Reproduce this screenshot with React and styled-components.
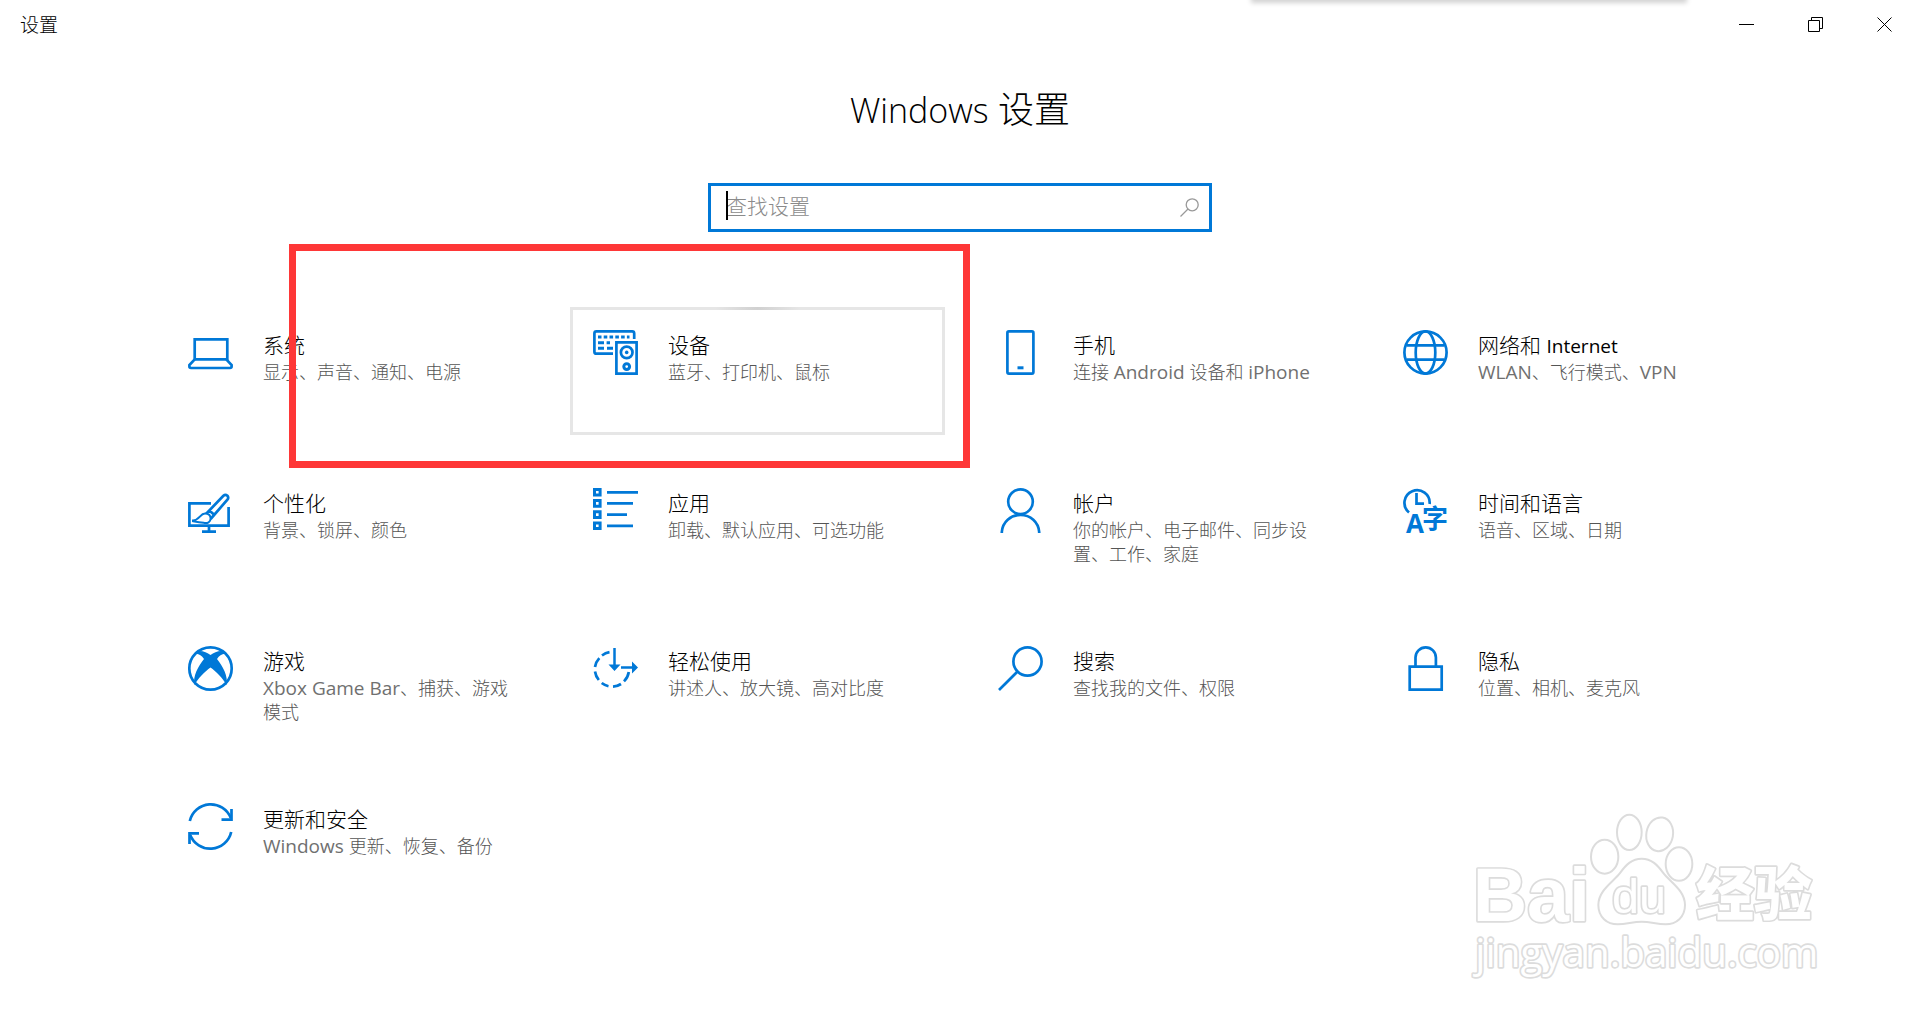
import styled, { createGlobalStyle, css } from "styled-components";

const blue = "#0078d7";

const GlobalStyle = createGlobalStyle`
  * {
    box-sizing: border-box;
  }
  body {
    margin: 0;
    background-color: #fff;
    color: #000;
    font-family: "Open Sans", "Noto Sans CJK SC", sans-serif;
  }
  h1, h2, p {
    margin: 0;
  }
`;

const Page = styled.div`
  position: relative;
  min-height: 100vh;
  overflow: hidden;
`;

/* bottom edge of a floating bar that hangs above the window */
const TopShade = styled.div`
  position: absolute;
  top: -10px;
  right: 234px;
  width: 434px;
  height: 10px;
  box-shadow: 0 2px 5px 1px rgba(0, 0, 0, 0.18);
`;

const TitleBar = styled.header`
  display: flex;
  justify-content: space-between;
  align-items: center;
  height: 48px;
  padding: 0 1px 0 20px;
  font-size: 19px;
  font-weight: 300;
`;

const WindowButtons = styled.div`
  display: flex;
  height: 100%;
`;

const WindowButton = styled.button`
  all: unset;
  width: 69px;
  display: flex;
  justify-content: center;
  align-items: center;
`;

const Main = styled.main`
  display: flex;
  flex-direction: column;
  align-items: center;
  padding: 38px 30px 30px;
`;

/* latin words sit next to the chinese text in their own size and weight */
const Latin = styled.span`
  font-size: ${({ $size }) => $size}px;
  font-weight: ${({ $weight }) => $weight || 400};
  line-height: 1;
`;

const Heading = styled.h1`
  font-size: 36px;
  font-weight: 300;
  line-height: 48px;
`;

const SearchBox = styled.label`
  position: relative;
  display: flex;
  align-items: center;
  width: 100%;
  max-width: 504px;
  height: 49px;
  margin: 49px 0 75px;
  padding: 0 10px 0 15px;
  border: 3px solid ${blue};
`;

const SearchInput = styled.input`
  all: unset;
  flex: 1;
  min-width: 0;
  padding-bottom: 3px;
  font-size: 21px;
  font-weight: 300;
  line-height: 28px;
  caret-color: transparent;
  &::placeholder {
    color: #8a8a8a;
    opacity: 1;
  }
`;

const Caret = styled.span`
  position: absolute;
  left: 15px;
  top: 5px;
  width: 2px;
  height: 29px;
  background-color: #000;
`;

const Grid = styled.nav`
  position: relative;
  display: grid;
  grid-template-columns: repeat(auto-fit, 375px);
  justify-content: center;
  gap: 30px;
  width: 100%;
  max-width: 1590px;
`;

const Tile = styled.a`
  display: flex;
  gap: 30px;
  height: 128px;
  padding: 20px 24px 0 20px;
  border: 3px solid transparent;
  color: inherit;
  text-decoration: none;
  ${({ $active }) =>
    $active &&
    css`
      border-image: radial-gradient(circle at 50% 0, #d0d0d0, #e6e6e6 42px) 3;
    `}
`;

const TileIcon = styled.svg`
  flex: none;
  width: 45px;
  height: 45px;
  overflow: visible;
  fill: none;
  stroke: ${blue};
  stroke-width: 2.7;
  .solid {
    fill: ${blue};
    stroke: none;
  }
  text {
    fill: ${blue};
    stroke: none;
  }
`;

const TileTitle = styled.h2`
  font-size: 21px;
  font-weight: 300;
  line-height: 30px;
`;

const TileInfo = styled.p`
  color: #555;
  font-size: 18px;
  font-weight: 300;
  line-height: 24px;
  ${Latin} {
    color: #707070;
  }
`;

/* red frame that points at the first two tiles */
const Marker = styled.div`
  position: absolute;
  left: 124px;
  top: -63px;
  width: 681px;
  height: 224px;
  border: 7px solid #fe3737;
  pointer-events: none;
`;

const Watermark = styled.svg`
  position: absolute;
  right: 80px;
  bottom: 19px;
  width: 400px;
  height: 210px;
  fill: #fff;
  stroke: #dcdcdc;
  stroke-width: 6;
  stroke-linejoin: round;
  pointer-events: none;
  text {
    paint-order: stroke;
    stroke-width: 10;
  }
`;

const icons = {
  system: (
    <>
      <path d="M6.7 9.3h32.6v20H6.7z" />
      <path d="M6.7 29.3 1.4 35v1.6q0 1.4 1.6 1.4h39q1.6 0 1.6-1.4V35l-5.3-5.7" />
    </>
  ),
  devices: (
    <>
      <path d="M20 23.7H3.4q-2 0-2-2V3.4q0-2 2-2h35.8q2 0 2 2V9" />
      <path
        d="M5 7h3.5m2.2 0h3.6m2.2 0h3.6m2.2 0h3.6m2.2 0h3.6m2.2 0h2.6M5 12.7h6m2.6 0H17M5 18.3h6m3 0h6"
        strokeWidth="3"
      />
      <path d="M23.4 12.4h20.2v31.2H23.4z" />
      <circle cx="33.7" cy="22.4" r="5.8" />
      <circle cx="33.7" cy="22.4" r="1.8" className="solid" />
      <circle cx="33.7" cy="36.6" r="2.9" strokeWidth="3" />
    </>
  ),
  phone: (
    <>
      <rect x="9.4" y="1.4" width="26" height="42.2" rx="1.5" />
      <path d="M19.5 37.8h6" strokeWidth="3" />
    </>
  ),
  network: (
    <>
      <circle cx="22.5" cy="22.5" r="21.1" />
      <ellipse cx="22.5" cy="22.5" rx="9.8" ry="21.1" />
      <path d="M3.5 15.4h38M3.5 29.6h38" />
    </>
  ),
  personalize: (
    <>
      <path d="M23 15.3H1.4v22.4h39.2V19M21 38v6M14 43.7h14" />
      <path d="M17.5 26.5 35.4 7.7q2-1.8 4 0 1.6 2 0 4L22.6 31M21.4 22.6l5 4.4" />
      <path
        d="M5 32.4c6.5 0 7-6.8 12-6.8 3.4 0 5.6 2 5.6 5 0 3.5-3 5-7 4.2C10 33.8 8 33.6 5 33.2z"
        fill="#fff"
        strokeWidth="2"
      />
    </>
  ),
  apps: (
    <>
      <path
        d="M1.5 1.5h5.6v5.6H1.5zM1.5 12.6h5.6v5.6H1.5zM1.5 23.8h5.6v5.6H1.5zM1.5 35h5.6v5.6H1.5z"
        strokeWidth="3"
      />
      <path d="M14 4.3h31M14 15.4h26M14 26.6h20M14 37.8h26" />
    </>
  ),
  accounts: (
    <>
      <circle cx="22.5" cy="13.7" r="12.3" />
      <path d="M3.8 45v-1C4.6 33.8 12.5 27 22.5 27s17.9 6.8 18.7 17v1" />
    </>
  ),
  time: (
    <>
      <path d="M6 24.5A12.6 12.6 0 1 1 26.6 16" />
      <path d="M13.5 5v10.7H21" />
      <text x="3" y="45" fontSize="26" fontWeight="700" fontFamily="Open Sans">A</text>
      <text x="19" y="40" fontSize="26" fontWeight="700" fontFamily="Noto Sans CJK SC">字</text>
    </>
  ),
  gaming: (
    <>
      <circle cx="22.5" cy="22.5" r="21.2" />
      <path
        className="solid"
        d="M7.5 6C12.5 3.3 18.5 6.3 22.5 9c4-2.7 10-5.7 15-3l1 2c-4-.8-7 1.5-9.5 5C34.5 20 40.5 30 38.5 39 35 32 28 25.5 22.5 21.5 17 25.5 10 32 6.5 39 4.5 30 10.5 20 16 13 13.5 9.5 10.5 7.2 6.5 8z"
      />
    </>
  ),
  ease: (
    <>
      <path d="M21.5 2v18M28 21.4h12" strokeWidth="2.5" />
      <path className="solid" d="M15.5 18.5h12l-6 6.5zM39 15.5v12l6-6z" />
      <path d="M16.5 6.2a17.2 17.2 0 0 0-7.5 3.3M6.3 12.2A17 17 0 0 0 2 21M2 25.5a17 17 0 0 0 3.8 8.5M8.7 37a17 17 0 0 0 6.8 3.2M20 40.7a17 17 0 0 0 8-2.7M31 35.4a17 17 0 0 0 4.8-9.4" />
    </>
  ),
  search: (
    <>
      <circle cx="29.5" cy="15.5" r="14.1" />
      <path d="M19.5 25.5 1 44" />
    </>
  ),
  privacy: (
    <>
      <path d="M6.7 20.7h32v22.9h-32z" />
      <path d="M12.5 20V11.6a10.2 10.2 0 0 1 20.4 0V20" />
    </>
  ),
  update: (
    <>
      <path d="M1.8 17A21.5 21.5 0 0 1 42.8 14M43.2 28A21.5 21.5 0 0 1 2.2 31" />
      <path d="M43.5 5v10.6H33.5M1.5 40V29.4h9.5" />
    </>
  ),
};

const tiles = [
  { icon: "system", title: "系统", info: "显示、声音、通知、电源" },
  { icon: "devices", title: "设备", info: "蓝牙、打印机、鼠标", active: true },
  { icon: "phone", title: "手机", info: "连接 Android 设备和 iPhone" },
  { icon: "network", title: "网络和 Internet", info: "WLAN、飞行模式、VPN" },
  { icon: "personalize", title: "个性化", info: "背景、锁屏、颜色" },
  { icon: "apps", title: "应用", info: "卸载、默认应用、可选功能" },
  { icon: "accounts", title: "帐户", info: "你的帐户、电子邮件、同步设置、工作、家庭" },
  { icon: "time", title: "时间和语言", info: "语音、区域、日期" },
  { icon: "gaming", title: "游戏", info: "Xbox Game Bar、捕获、游戏模式" },
  { icon: "ease", title: "轻松使用", info: "讲述人、放大镜、高对比度" },
  { icon: "search", title: "搜索", info: "查找我的文件、权限" },
  { icon: "privacy", title: "隐私", info: "位置、相机、麦克风" },
  { icon: "update", title: "更新和安全", info: "Windows 更新、恢复、备份" },
];

// every odd part of the split is a run of latin letters
const withLatin = (text, size) =>
  text.split(/([A-Za-z][A-Za-z ]*)/).map((part, i) =>
    i % 2 ? (
      <Latin key={i} $size={size}>
        {part}
      </Latin>
    ) : (
      part
    )
  );

const App = () => {
  return (
    <Page lang="zh-CN">
      <GlobalStyle />
      <TopShade />
      <TitleBar>
        <span>设置</span>
        <WindowButtons>
          <WindowButton aria-label="最小化">
            <svg width="15" height="15" fill="none" stroke="#000">
              <path d="M0 7.5h15" />
            </svg>
          </WindowButton>
          <WindowButton aria-label="还原">
            <svg width="15" height="15" fill="none" stroke="#000">
              <path d="M.5 3.5h11v11H.5zM3.5 3.5v-3h11v11h-3" />
            </svg>
          </WindowButton>
          <WindowButton aria-label="关闭">
            <svg width="15" height="15" fill="none" stroke="#000">
              <path d="m.5.5 14 14m0-14-14 14" />
            </svg>
          </WindowButton>
        </WindowButtons>
      </TitleBar>
      <Main>
        <Heading>
          <Latin $size={34} $weight={300}>Windows</Latin> 设置
        </Heading>
        <SearchBox>
          <Caret />
          <SearchInput type="text" placeholder="查找设置" aria-label="查找设置" />
          <svg width="19" height="19" fill="none" stroke="#999" strokeWidth="1.3">
            <circle cx="12.2" cy="6.8" r="6" />
            <path d="M8 11 .5 18.5" />
          </svg>
        </SearchBox>
        <Grid>
          {tiles.map((tile) => (
            <Tile key={tile.icon} href={`#${tile.icon}`} $active={tile.active}>
              <TileIcon viewBox="0 0 45 45" aria-hidden="true">
                {icons[tile.icon]}
              </TileIcon>
              <div>
                <TileTitle>{withLatin(tile.title, 19)}</TileTitle>
                <TileInfo>{withLatin(tile.info, 19)}</TileInfo>
              </div>
            </Tile>
          ))}
          <Marker />
        </Grid>
      </Main>
      <Watermark viewBox="0 0 1200 630">
        <ellipse cx="494" cy="200" rx="41" ry="51" />
        <ellipse cx="568" cy="127" rx="37" ry="53" />
        <ellipse cx="659" cy="133" rx="40" ry="51" transform="rotate(10 659 133)" />
        <ellipse cx="717" cy="222" rx="40" ry="50" />
        <path d="M605 206c30 0 48 20 64 42 20 27 66 52 66 97 0 36-26 58-58 58-28 0-44-8-72-8s-44 8-72 8c-32 0-58-22-58-58 0-45 46-70 66-97 16-22 34-42 64-42z" />
        <text x="98" y="393" fontSize="226" fontWeight="700" fontFamily="Liberation Sans">Bai</text>
        <text x="516" y="368" fontSize="146" fontFamily="Liberation Sans">du</text>
        <text x="768" y="376" fontSize="174" fontWeight="900" fontFamily="Noto Sans CJK SC">经验</text>
        <text x="106" y="530" fontSize="121" fontFamily="Open Sans">jingyan.baidu.com</text>
      </Watermark>
    </Page>
  );
};

export default App;
